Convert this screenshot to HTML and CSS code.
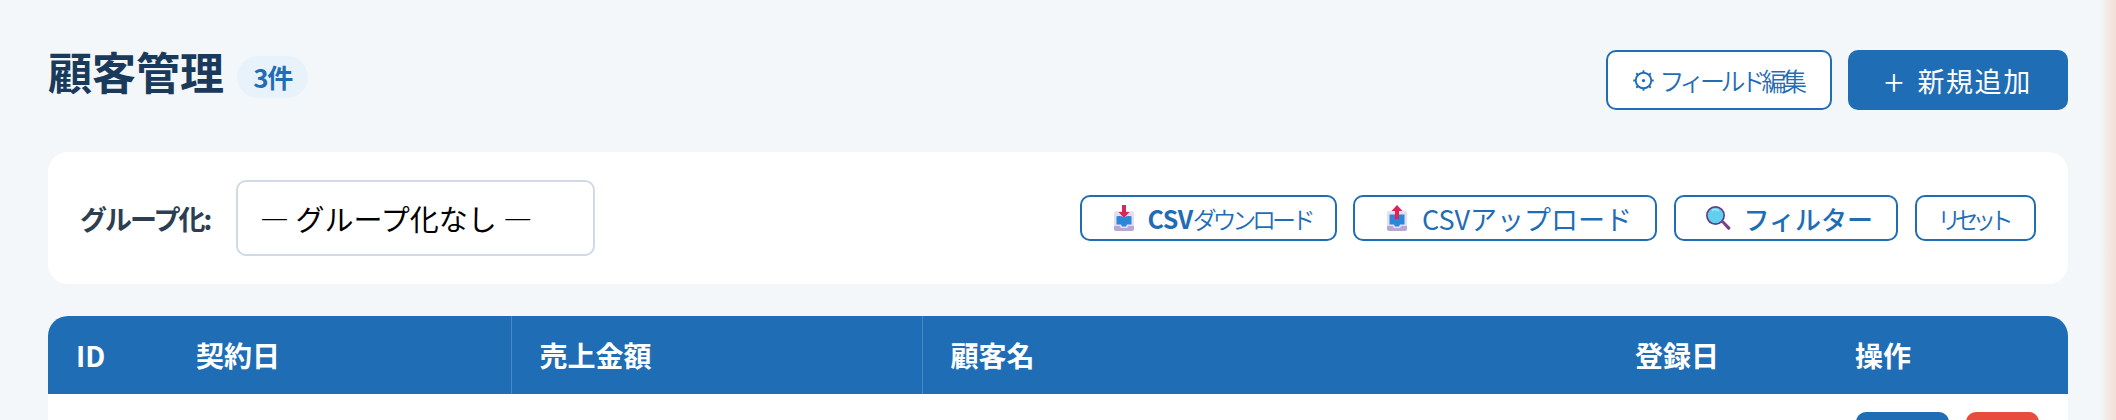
FILE: index.html
```html
<!DOCTYPE html>
<html lang="ja">
<head>
<meta charset="utf-8">
<title>顧客管理</title>
<link rel="stylesheet" href="styles.css">
</head>
<body>
<main class="page">
  <header class="page-head">
    <div class="title-wrap">
      <h1 class="title">顧客管理</h1>
      <span class="badge">3件</span>
    </div>
    <div class="head-actions">
      <button class="btn-outline btn-field" type="button">
        <svg class="gear" viewBox="0 0 20 20" aria-hidden="true"><circle cx="10" cy="10" r="6.2" fill="none" stroke="currentColor" stroke-width="1.5"/><circle cx="10" cy="10" r="1.3" fill="currentColor"/><path d="M10 1.8v2M10 16.2v2M1.8 10h2M16.2 10h2M4.2 4.2l1.4 1.4M14.4 14.4l1.4 1.4M4.2 15.8l1.4-1.4M14.4 5.6l1.4-1.4" stroke="currentColor" stroke-width="1.5" fill="none"/></svg>
        <span>フィールド編集</span>
      </button>
      <button class="btn-primary" type="button"><span class="plus">+</span><span class="add-label">新規追加</span></button>
    </div>
  </header>

  <section class="toolbar">
    <div class="group">
      <label class="group-label" for="group">グループ化:</label>
      <select class="group-select" id="group"><option>— グループ化なし —</option></select>
    </div>
    <div class="tools">
      <button class="tool tool-down" type="button">
        <svg class="emoji" viewBox="0 0 22 26" aria-hidden="true"><rect x="1" y="6" width="20" height="20" rx="2.5" fill="#e3dfee"/><path d="M1 21h5.5l1.5 2h6l1.500-2H21v2.500a2.500 2.500 0 0 1-2.500 2.500h-15A2.500 2.500 0 0 1 1 23.500z" fill="#b9a6d3"/><path d="M3.500 11.500c2.500-.8 5-.5 7.500 1 2.500-1.500 5-1.800 7.500-1v8h-4.500l-1 2h-4l-1-2H3.500z" fill="#2b88d8"/><path d="M9 0h4v7h3.500L11 13 5.500 7H9z" fill="#dc2554"/></svg>
        <span class="csv-bold">CSV</span><span class="thin down-label">ダウンロード</span>
      </button>
      <button class="tool tool-up" type="button">
        <svg class="emoji" viewBox="0 0 22 26" aria-hidden="true"><rect x="1" y="6" width="20" height="20" rx="2.500" fill="#e3dfee"/><path d="M1 21h5.500l1.500 2h6l1.500-2H21v2.500a2.500 2.500 0 0 1-2.500 2.500h-15A2.500 2.500 0 0 1 1 23.500z" fill="#b9a6d3"/><path d="M3.500 9.500h15v10h-4.500l-1 2h-4l-1-2H3.500z" fill="#2b88d8"/><path d="M11 0l5.500 6H13v8H9V6H5.500z" fill="#dc2554"/></svg>
        <span class="upload">CSVアップロード</span>
      </button>
      <button class="tool tool-filter" type="button">
        <svg class="emoji lens" viewBox="0 0 26 26" aria-hidden="true"><path d="M16.500 17.500l2-2 6.500 6.500a1.600 1.600 0 0 1-.2 2.300 1.600 1.600 0 0 1-2.300 0z" fill="#7b3f8c"/><circle cx="10.500" cy="10.500" r="9.500" fill="#5f3f86"/><circle cx="10.500" cy="10.500" r="7.800" fill="#62cfee"/><path d="M7 5.500a6 6 0 0 1 7 .5" stroke="#a9e6f7" stroke-width="1.500" fill="none"/></svg>
        <span class="filter-label">フィルター</span>
      </button>
      <button class="tool tool-reset" type="button"><span class="thin reset-label">リセット</span></button>
    </div>
  </section>

  <section class="table-card">
    <table class="grid">
      <colgroup>
        <col class="c-id"><col class="c-date"><col class="c-sales"><col class="c-name"><col class="c-reg"><col class="c-ops">
      </colgroup>
      <thead>
        <tr>
          <th>ID</th>
          <th class="sep">契約日</th>
          <th class="sep">売上金額</th>
          <th>顧客名</th>
          <th>登録日</th>
          <th>操作</th>
        </tr>
      </thead>
      <tbody>
        <tr>
          <td></td><td></td><td></td><td></td><td></td>
          <td class="ops"><button class="row-btn row-edit" type="button" aria-label="編集"></button><button class="row-btn row-del" type="button" aria-label="削除"></button></td>
        </tr>
      </tbody>
    </table>
  </section>
</main>
<div class="edge" aria-hidden="true"></div>
</body>
</html>
```

FILE: styles.css
```css
* { box-sizing: border-box; }
html, body { margin: 0; height: 420px; overflow: hidden; }
body {
  background: #f4f7fa;
  font-family: "Noto Sans CJK JP", "Noto Sans", sans-serif;
  color: #1a3a5c;
}
button { font-family: inherit; cursor: pointer; }

.page { padding: 50px 48px 0; height: 420px; overflow: hidden; }

.page-head {
  display: flex;
  justify-content: space-between;
  align-items: center;
  height: 60px;
  margin-bottom: 42px;
}
.title-wrap { display: flex; align-items: center; gap: 13px; margin-top: -14px; }
.title { margin: 0 0 5px; font-size: 44px; line-height: 48px; font-weight: 700; color: #1a3a5c; }
.badge {
  display: flex; align-items: center; justify-content: center;
  width: 71px; height: 42px; margin-top: 7px;
  border-radius: 21px;
  background: #e8f2fb;
  color: #1f6db5;
  font-size: 26px; font-weight: 700;
  letter-spacing: -1.5px;
}
.head-actions { display: flex; gap: 16px; }
.btn-outline {
  display: flex; align-items: center; justify-content: center; gap: 3px;
  width: 226px; height: 60px;
  background: #fff;
  border: 2px solid #1f6db5;
  border-radius: 10px;
  color: #1f6db5;
  font-size: 25px; font-weight: 350;
  letter-spacing: -4.5px;
  padding: 0 4px 0 0;
}
.gear { width: 25px; height: 25px; flex: none; }
.btn-primary {
  display: flex; align-items: center; justify-content: center; gap: 14px;
  width: 220px; height: 60px;
  background: #1f6db5;
  border: 0;
  border-radius: 10px;
  color: #fff;
  font-size: 27px; font-weight: 400;
  padding: 0;
}
.plus { font-size: 36px; line-height: 36px; font-weight: 300; }
.add-label { letter-spacing: 1.6px; }

.toolbar {
  display: flex; align-items: center; justify-content: space-between;
  height: 132px;
  padding: 0 32px;
  background: #fff;
  border-radius: 20px;
  margin-bottom: 32px;
}
.group { display: flex; align-items: center; gap: 24px; }
.group-label { width: 132px; font-size: 27px; font-weight: 700; color: #2c3e50; letter-spacing: -2px; white-space: nowrap; }
.group-select {
  appearance: none;
  width: 359px; height: 76px;
  padding: 0 22px;
  background: #fff;
  border: 2px solid #d0dae6;
  border-radius: 10px;
  font-family: inherit;
  font-size: 29px;
  color: #000;
}
.tools { display: flex; gap: 16.500px; }
.tool {
  display: flex; align-items: center;
  height: 46px;
  padding: 0;
  background: #fff;
  border: 2px solid #1f6db5;
  border-radius: 10px;
  color: #1f6db5;
  font-size: 24px;
  white-space: nowrap;
}
.emoji { width: 22px; height: 26px; flex: none; }
.tool-down { width: 257px; padding-left: 31px; }
.tool-up { width: 304px; padding-left: 31px; }
.tool-filter { width: 224.500px; padding-left: 29px; }
.tool-reset { width: 121.500px; justify-content: center; }
.lens { width: 26px; }
.csv-bold { margin-left: 13px; font-size: 25px; font-weight: 700; letter-spacing: -.5px; }
.thin { font-weight: 350; }
.down-label { font-size: 24px; letter-spacing: -4.2px; }
.upload { margin-left: 14px; font-size: 27px; font-weight: 400; letter-spacing: 0; }
.filter-label { margin-left: 13px; font-size: 26px; font-weight: 500; }
.reset-label { font-size: 24px; letter-spacing: -6.5px; margin-right: 6px; }

.table-card { border-radius: 20px 20px 0 0; overflow: hidden; background: #fff; }
.grid { width: 100%; border-collapse: collapse; table-layout: fixed; }
.c-id { width: 120px; }
.c-date { width: 343px; }
.c-sales { width: 411px; }
.c-name { width: 685px; }
.c-reg { width: 220px; }
.grid th {
  height: 78px;
  padding: 0 28px;
  background: #1f6db5;
  color: #fff;
  font-size: 28px; font-weight: 700;
  text-align: left;
  white-space: nowrap;
}
.grid th.sep { border-right: 1px solid #4a88c4; }
.grid td { height: 80px; padding: 18px 29px 0; vertical-align: top; background: #fff; }
.ops { display: flex; gap: 17px; white-space: nowrap; }
.row-btn { display: block; width: 93px; height: 44px; border: 0; border-radius: 10px; padding: 0; }
.row-edit { background: #1f6db5; }
.row-del { width: 73px; background: #e74c3c; }

.edge {
  position: absolute; top: 0; right: 0; bottom: 0;
  width: 16px;
  background: linear-gradient(to right, #f4f7fa, #f3e4e0 70%, #f2dfd9);
}
```
